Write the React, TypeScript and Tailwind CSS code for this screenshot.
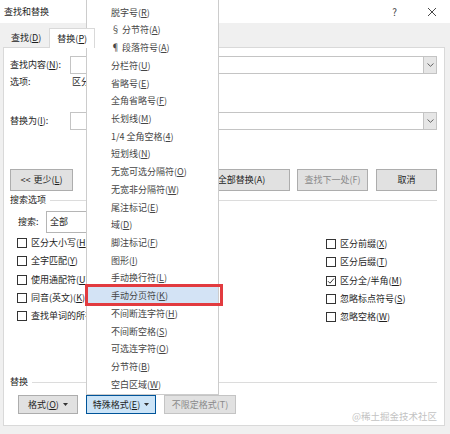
import React from 'react';

const font = { fontFamily: '"Noto Sans CJK SC", "Noto Sans", sans-serif' };

const menuItems: [string, string][] = [
  ['脱字号', 'R'],
  ['§ 分节符', 'A'],
  ['¶ 段落符号', 'A'],
  ['分栏符', 'U'],
  ['省略号', 'E'],
  ['全角省略号', 'F'],
  ['长划线', 'M'],
  ['1/4 全角空格', '4'],
  ['短划线', 'N'],
  ['无宽可选分隔符', 'O'],
  ['无宽非分隔符', 'W'],
  ['尾注标记', 'E'],
  ['域', 'D'],
  ['脚注标记', 'F'],
  ['图形', 'I'],
  ['手动换行符', 'L'],
  ['手动分页符', 'K'],
  ['不间断连字符', 'H'],
  ['不间断空格', 'S'],
  ['可选连字符', 'O'],
  ['分节符', 'B'],
  ['空白区域', 'W'],
];

const leftChecks: [string, string][] = [
  ['区分大小写', 'H'],
  ['全字匹配', 'Y'],
  ['使用通配符', 'U'],
  ['同音(英文)', 'K'],
  ['查找单词的所有形式(英文)', 'W'],
];

const rightChecks: [string, string, boolean][] = [
  ['区分前缀', 'X', false],
  ['区分后缀', 'T', false],
  ['区分全/半角', 'M', true],
  ['忽略标点符号', 'S', false],
  ['忽略空格', 'W', false],
];

const Key = ({ label, k }: { label: string; k: string }) => (
  <span className="whitespace-nowrap">
    {label}(<u className="underline-offset-[1px]">{k}</u>)
  </span>
);

const Caret = () => (
  <svg width="5" height="3" viewBox="0 0 5 3" className="ml-[4px]">
    <path d="M0 0h5L2.5 3z" fill="#333" />
  </svg>
);

const Combo = () => (
  <div className="flex-1 h-[18px] border border-[#c4c4c4] bg-white flex justify-end">
    <div className="w-[13px] h-full bg-[#e6e6e6] border-l border-[#c4c4c4] flex items-center justify-center">
      <svg width="7" height="4" viewBox="0 0 7 4">
        <path d="M0.5 0.5L3.5 3.3L6.5 0.5" stroke="#555" strokeWidth="0.9" fill="none" />
      </svg>
    </div>
  </div>
);

const CheckBox = ({ checked }: { checked?: boolean }) => (
  <span className="w-[10px] h-[10px] border border-[#333] bg-white flex items-center justify-center shrink-0">
    {checked && (
      <svg width="8" height="8" viewBox="0 0 8 8">
        <path d="M1 4.2L3 6.2L7 1.5" stroke="#222" strokeWidth="0.9" fill="none" />
      </svg>
    )}
  </span>
);

const Btn = ({ w, children, muted }: { w: string; children: React.ReactNode; muted?: boolean }) => (
  <div
    className={`${w} h-[22px] bg-[#e1e1e1] border border-[#adadad] flex items-center justify-center ${
      muted ? 'text-[#8a8a8a]' : ''
    }`}
  >
    {children}
  </div>
);

const Section = ({ title, className }: { title: string; className: string }) => (
  <div className={`flex items-center h-[12px] pl-[6px] pr-[7px] ${className}`}>
    <span>{title}</span>
    <div className="flex-1 h-px bg-[#dcdcdc] ml-[4px]" />
  </div>
);

export default function App() {
  return (
    <div className="w-[450px] h-[434px] bg-[#f0f0f0] relative overflow-hidden text-[9px] leading-[12px] text-[#1e1e1e]" style={font}>
      {/* Title bar */}
      <div className="h-[23px] bg-white flex items-center pl-[4px] pr-[13px]">
        <span className="flex-1">查找和替换</span>
        <span className="text-[10px] text-[#444] mr-[30px]">?</span>
        <svg width="10" height="10" viewBox="0 0 10 10">
          <path d="M1 1L9 9M9 1L1 9" stroke="#333" strokeWidth="0.9" />
        </svg>
      </div>

      {/* Tabs */}
      <div className="h-[24px] flex items-end pl-[3px]">
        <div className="h-[18px] px-[8px] flex items-center">
          <Key label="查找" k="D" />
        </div>
        <div className="h-[20px] px-[7px] flex items-center bg-white border border-b-0 border-[#d9d9d9] -mb-px relative z-10">
          <Key label="替换" k="P" />
        </div>
      </div>

      {/* Panel */}
      <div className="ml-[3px] w-[442px] h-[379px] bg-white border border-[#d9d9d9] flex flex-col">
        <div className="flex items-center mt-[8px] pl-[6px] pr-[7px]">
          <span className="w-[60px]">
            查找内容(<u>N</u>):
          </span>
          <Combo />
        </div>
        <div className="flex h-[12px] mt-[2px] pl-[6px]">
          <span className="w-[62px]">选项:</span>
          <span>区分全/半角</span>
        </div>
        <div className="flex items-center mt-[24px] pl-[6px] pr-[7px]">
          <span className="w-[60px]">
            替换为(<u>I</u>):
          </span>
          <Combo />
        </div>

        <div className="flex mt-[39px] pl-[6px] pr-[7px]">
          <Btn w="w-[63px]">
            <span className="mr-[3px]">{'<<'}</span>
            <Key label="更少" k="L" />
          </Btn>
          <div className="flex-1" />
          <Btn w="w-[71px]">
            <Key label="替换" k="R" />
          </Btn>
          <div className="w-[7px]" />
          <Btn w="w-[97px]">全部替换(A)</Btn>
          <div className="w-[7px]" />
          <Btn w="w-[71px]" muted>
            查找下一处(F)
          </Btn>
          <div className="w-[8px]" />
          <Btn w="w-[61px]">取消</Btn>
        </div>

        <Section title="搜索选项" className="mt-[3px]" />

        <div className="flex items-center mt-[5px] pl-[14px]">
          <span className="w-[28px]">搜索:</span>
          <div className="w-[110px] h-[22px] border border-[#b5b5b5] flex items-center pl-[3px]">全部</div>
        </div>

        <div className="flex mt-px pl-[13px]">
          <div className="w-[309px] flex flex-col">
            {leftChecks.map(([l, k]) => (
              <div key={l} className="h-[18.25px] flex items-center gap-[4px]">
                <CheckBox />
                <Key label={l} k={k} />
              </div>
            ))}
          </div>
          <div className="flex flex-col mt-px">
            {rightChecks.map(([l, k, c]) => (
              <div key={l} className="h-[18.25px] flex items-center gap-[4px]">
                <CheckBox checked={c} />
                <Key label={l} k={k} />
              </div>
            ))}
          </div>
        </div>

        <Section title="替换" className="mt-[50px]" />

        <div className="flex mt-[7px] pl-[14px] gap-[8px]">
          <div className="w-[60px] h-[19px] bg-[#e1e1e1] border border-[#adadad] flex items-center justify-center">
            <Key label="格式" k="O" />
            <Caret />
          </div>
          <div className="w-[70px] h-[19px] bg-[#cce4f7] border border-[#005499] flex items-center justify-center">
            <Key label="特殊格式" k="E" />
            <Caret />
          </div>
          <div className="w-[72px] h-[19px] bg-[#e1e1e1] border border-[#c4c4c4] flex items-center justify-center text-[#8a8a8a]">
            不限定格式(T)
          </div>
        </div>
      </div>

      {/* Watermark */}
      <div className="absolute right-[13px] top-[410px] text-[9.5px] text-[#c3c3c3]">@稀土掘金技术社区</div>

      {/* Dropdown menu */}
      <div className="absolute left-[86px] top-[-1px] w-[133px] bg-white border border-[#cccccc] pt-[3.8px] text-[#454545]">
        {menuItems.map(([l, k], i) => (
          <div
            key={i}
            className={`h-[17.73px] flex items-center pl-[24px] ${i === 16 ? 'bg-[#d3e3f5]' : ''}`}
          >
            <Key label={l} k={k} />
          </div>
        ))}
      </div>

      {/* Annotation box */}
      <div className="absolute left-[85px] top-[284px] w-[138px] h-[22px] border-[3px] border-[#e23b3f]" />
    </div>
  );
}
